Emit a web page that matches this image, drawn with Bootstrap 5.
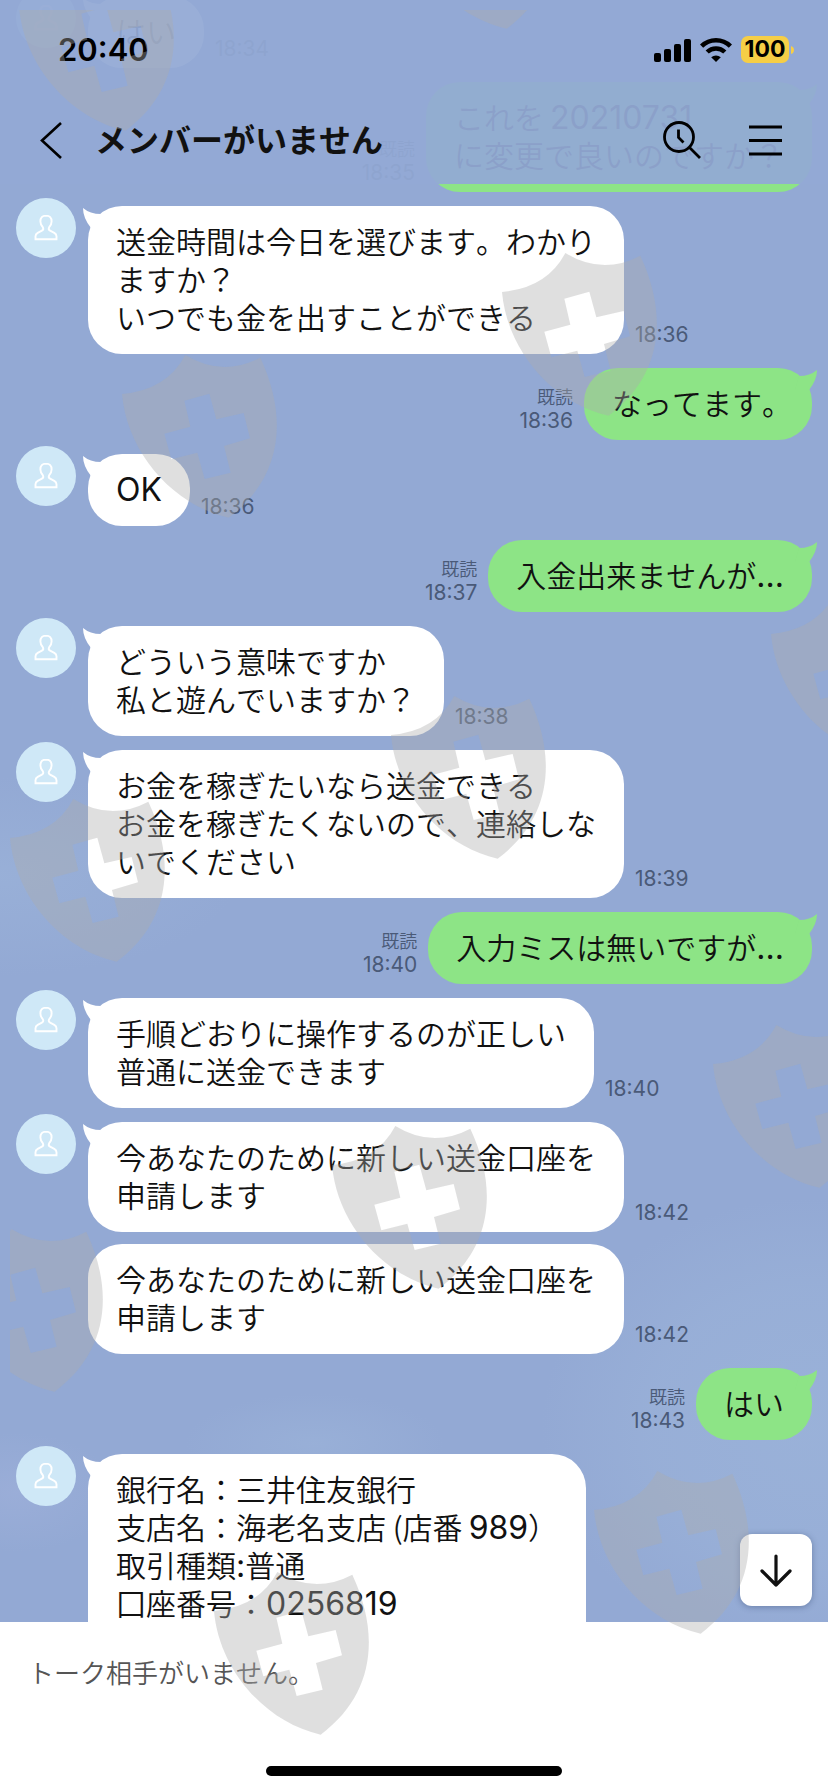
<!DOCTYPE html>
<html lang="ja">
<head>
<meta charset="utf-8">
<meta name="viewport" content="width=device-width, initial-scale=1">
<title>トーク</title>
<link href="https://cdn.jsdelivr.net/npm/bootstrap@5.3.0/dist/css/bootstrap.min.css" rel="stylesheet">
<style>
:root { --sky: #93a9d4; --own: #8de486; --ink: #111; }
body { font-family: "Noto Sans CJK JP", "Inter", sans-serif; font-weight: 350; font-kerning: none; color: var(--ink); background: #fff; }
.latin { font-family: "Inter", "Noto Sans CJK JP", sans-serif; font-weight: 400; font-kerning: normal; }

/* translucent bar over the scrolled conversation */
.topbar { background: rgba(147, 169, 212, .94); height: 184px; z-index: 5; }
.status { height: 80px; padding: 19px 34px 0 58px; }
.clock { font-size: 31px; font-weight: 600; line-height: 40px; color: #000; }
.battery { width: 48px; height: 27px; border-radius: 7px; background: #f6ce46; font-size: 23px; font-weight: 700; line-height: 27px; color: #000; }
.titlebar { height: 104px; padding: 16px 40px 0 34px; }
.titlebar h1 { font-size: 32px; font-weight: 700; line-height: 40px; margin-left: 26px; padding-bottom: 4px; }
.icon-btn { border: 0; background: none; padding: 0; line-height: 0; color: #000; }
.icon-btn + .icon-btn { margin-left: 40px; }

.chat {
  min-height: 0;
  background:
    radial-gradient(ellipse 270px 230px at 98% 88%, rgba(156, 180, 218, .75), rgba(156, 180, 218, .5) 60%, rgba(156, 180, 218, 0)),
    radial-gradient(ellipse 240px 100px at 0 54%, rgba(156, 180, 218, .6), rgba(156, 180, 218, 0)),
    radial-gradient(ellipse 100px 60px at 2% 92%, rgba(162, 178, 220, .5), rgba(162, 178, 220, 0)),
    radial-gradient(ellipse 130px 50px at 38% 89%, rgba(156, 180, 218, .6), rgba(156, 180, 218, 0)),
    var(--sky);
}
.log { padding: 0 16px; margin-top: -4px; }
.msg { gap: 11px; }
.msg + .msg { margin-top: 14px; }
.msg + .follow { margin-top: 12px; }
.follow { padding-left: 72px; }
.face { width: 60px; height: 60px; margin: -8px 1px 0 0; align-self: flex-start; }
.balloon { background: #fff; border-radius: 34px; padding: 15px 28px 19px; font-size: 30px; line-height: 38px; white-space: nowrap; }
.balloon .latin { font-size: 32px; line-height: 1; }
.balloon.mine { background: var(--own); }
.balloon.full-stop { padding-right: 20px; }
.tail { top: 2px; left: -5px; }
.mine .tail { left: auto; right: -5px; }
.stamp { color: #4a5a78; font-size: 21px; line-height: 24px; padding-bottom: 7px; }
.stamp small { display: block; font-family: "Noto Sans CJK JP", sans-serif; font-size: 18px; font-weight: 350; line-height: 26px; }
.to-end { right: 16px; bottom: 16px; width: 72px; height: 72px; border: 0; border-radius: 12px; background: #fff; box-shadow: 0 1px 6px rgba(40, 60, 100, .4); }

.composer { height: 170px; background: #fff; }
.composer p { font-size: 26px; line-height: 40px; color: #555; padding: 30px 28px 0; }
.home { width: 296px; height: 10px; border-radius: 5px; background: #000; margin-bottom: 16px; }

.stamps { inset: 10px 0 0 10px; overflow: hidden; pointer-events: none; z-index: 10; }
</style>
</head>
<body class="vh-100 d-flex flex-column position-relative overflow-hidden">

<svg width="0" height="0" class="position-absolute" aria-hidden="true">
  <defs>
    <g id="person">
      <circle cx="30" cy="30" r="30" fill="#cfe8f7"/>
      <path d="M30 17.6c-3.9 0-5.6 2.8-5.6 5.8 0 2.8 1.1 4.3 2.5 5.9.7 1.4.3 2.6-1 3.3l-4.2 2.2c-1.6.9-2.2 1.9-2.2 3.4v3.1h21v-3.1c0-1.5-.6-2.5-2.2-3.4l-4.2-2.2c-1.3-.7-1.7-1.9-1-3.3 1.4-1.6 2.5-3.1 2.5-5.9 0-3-1.7-5.8-5.6-5.8z" fill="none" stroke="#fff" stroke-width="1.9"/>
    </g>
    <path id="tail-left" d="M0 0Q7 6 18 6L22 20H8Q0 10 0 0Z" fill="#fff"/>
    <path id="tail-right" d="M22 0Q15 6 4 6L0 20H14Q22 10 22 0Z" fill="#8de486"/>
    <path id="shield" fill-rule="evenodd" transform="scale(.33333)" d="M0 117Q135 105 190 0Q301 68 415 8C500 190 480 370 320 488C150 450 15 290 0 117ZM187 137L262 116L283 193L365 174L384 250L306 273L326 353L248 372L226 293L148 313L127 236L205 215Z"/>
  </defs>
</svg>

<header class="topbar position-absolute top-0 start-0 end-0">
  <div class="status d-flex align-items-center justify-content-between">
    <span class="clock latin">20:40</span>
    <div class="d-flex align-items-center">
      <svg width="37" height="24" viewBox="0 0 37 24" aria-label="電波"><rect y="15" width="7" height="9" rx="2"/><rect x="10" y="11" width="7" height="13" rx="2"/><rect x="20" y="6" width="7" height="18" rx="2"/><rect x="30" y="1" width="7" height="23" rx="2"/></svg>
      <svg class="ms-2 me-2" width="34" height="24" viewBox="0 0 34 24" fill="none" stroke="#000" stroke-width="4.5" aria-label="Wi-Fi"><path d="M2.6 8.2a20.5 20.5 0 0 1 28.8 0"/><path d="M8.2 14a12.5 12.5 0 0 1 17.6 0"/><path d="M17 24l-4.8-4.700a7 7 0 0 1 9.6 0z" fill="#000" stroke="none"/></svg>
      <span class="battery latin text-center">100</span>
      <svg width="5" height="10" viewBox="0 0 5 10"><path d="M2 1q3 1 3 4t-3 4z" fill="#f6ce46"/></svg>
    </div>
  </div>
  <div class="titlebar d-flex align-items-center">
    <button class="icon-btn" type="button" aria-label="戻る"><svg width="35" height="40" viewBox="0 0 35 40" fill="none" stroke="currentColor" stroke-width="2.6"><path d="M27 3L8 20.5L27 38"/></svg></button>
    <h1 class="mb-0 text-nowrap">メンバーがいません</h1>
    <button class="icon-btn ms-auto" type="button" aria-label="検索"><svg width="40" height="40" viewBox="0 0 40 40" fill="none" stroke="currentColor" stroke-width="2.8"><circle cx="17" cy="17" r="14.5"/><path d="M16.5 9.5v8l5 5M27.5 27.5L38 38"/></svg></button>
    <button class="icon-btn" type="button" aria-label="メニュー"><svg width="46" height="40" viewBox="0 0 46 40" fill="none" stroke="currentColor" stroke-width="2.8"><path d="M7 7h33M7 20.5h33M7 34h33"/></svg></button>
  </div>
</header>

<main class="chat flex-grow-1 position-relative overflow-hidden">
  <div class="log">
    <article class="msg d-flex align-items-end">
      <svg class="face flex-shrink-0"><use href="#person"/></svg>
      <div class="balloon position-relative"><svg class="tail position-absolute" width="22" height="20"><use href="#tail-left"/></svg>はい</div>
      <time class="stamp latin">18:34</time>
    </article>
    <article class="msg d-flex align-items-end justify-content-end">
      <time class="stamp latin text-end"><small>既読</small>18:35</time>
      <div class="balloon mine position-relative"><svg class="tail position-absolute" width="22" height="20"><use href="#tail-right"/></svg>これを&thinsp;<span class="latin">20210731</span><br>に変更で良いのですか？</div>
    </article>
    <article class="msg d-flex align-items-end">
      <svg class="face flex-shrink-0"><use href="#person"/></svg>
      <div class="balloon position-relative"><svg class="tail position-absolute" width="22" height="20"><use href="#tail-left"/></svg>送金時間は今日を選びます。わかり<br>ますか？<br>いつでも金を出すことができる</div>
      <time class="stamp latin">18:36</time>
    </article>
    <article class="msg d-flex align-items-end justify-content-end">
      <time class="stamp latin text-end"><small>既読</small>18:36</time>
      <div class="balloon mine full-stop position-relative"><svg class="tail position-absolute" width="22" height="20"><use href="#tail-right"/></svg>なってます。</div>
    </article>
    <article class="msg d-flex align-items-end">
      <svg class="face flex-shrink-0"><use href="#person"/></svg>
      <div class="balloon position-relative"><svg class="tail position-absolute" width="22" height="20"><use href="#tail-left"/></svg><span class="latin">OK</span></div>
      <time class="stamp latin">18:36</time>
    </article>
    <article class="msg d-flex align-items-end justify-content-end">
      <time class="stamp latin text-end"><small>既読</small>18:37</time>
      <div class="balloon mine position-relative"><svg class="tail position-absolute" width="22" height="20"><use href="#tail-right"/></svg>入金出来ませんが<span class="latin">...</span></div>
    </article>
    <article class="msg d-flex align-items-end">
      <svg class="face flex-shrink-0"><use href="#person"/></svg>
      <div class="balloon position-relative"><svg class="tail position-absolute" width="22" height="20"><use href="#tail-left"/></svg>どういう意味ですか<br>私と遊んでいますか？</div>
      <time class="stamp latin">18:38</time>
    </article>
    <article class="msg d-flex align-items-end">
      <svg class="face flex-shrink-0"><use href="#person"/></svg>
      <div class="balloon position-relative"><svg class="tail position-absolute" width="22" height="20"><use href="#tail-left"/></svg>お金を稼ぎたいなら送金できる<br>お金を稼ぎたくないので、連絡しな<br>いでください</div>
      <time class="stamp latin">18:39</time>
    </article>
    <article class="msg d-flex align-items-end justify-content-end">
      <time class="stamp latin text-end"><small>既読</small>18:40</time>
      <div class="balloon mine position-relative"><svg class="tail position-absolute" width="22" height="20"><use href="#tail-right"/></svg>入力ミスは無いですが<span class="latin">...</span></div>
    </article>
    <article class="msg d-flex align-items-end">
      <svg class="face flex-shrink-0"><use href="#person"/></svg>
      <div class="balloon position-relative"><svg class="tail position-absolute" width="22" height="20"><use href="#tail-left"/></svg>手順どおりに操作するのが正しい<br>普通に送金できます</div>
      <time class="stamp latin">18:40</time>
    </article>
    <article class="msg d-flex align-items-end">
      <svg class="face flex-shrink-0"><use href="#person"/></svg>
      <div class="balloon position-relative"><svg class="tail position-absolute" width="22" height="20"><use href="#tail-left"/></svg>今あなたのために新しい送金口座を<br>申請します</div>
      <time class="stamp latin">18:42</time>
    </article>
    <article class="msg follow d-flex align-items-end">
      <div class="balloon">今あなたのために新しい送金口座を<br>申請します</div>
      <time class="stamp latin">18:42</time>
    </article>
    <article class="msg d-flex align-items-end justify-content-end">
      <time class="stamp latin text-end"><small>既読</small>18:43</time>
      <div class="balloon mine position-relative"><svg class="tail position-absolute" width="22" height="20"><use href="#tail-right"/></svg>はい</div>
    </article>
    <article class="msg d-flex align-items-end">
      <svg class="face flex-shrink-0"><use href="#person"/></svg>
      <div class="balloon rounded-bottom-0 position-relative"><svg class="tail position-absolute" width="22" height="20"><use href="#tail-left"/></svg>銀行名：三井住友銀行<br>支店名：海老名支店 (店番&thinsp;<span class="latin">989</span>）<br>取引種類<span class="latin">:</span>普通<br>囗座番号：<span class="latin">0256819</span></div>
    </article>
  </div>
  <button class="to-end position-absolute p-0" type="button" aria-label="最新のメッセージへ">
    <svg width="36" height="36" viewBox="0 0 36 36" fill="none" stroke="#111" stroke-width="3.2" stroke-linecap="round" stroke-linejoin="round"><path d="M18 4v29M4 19l14 14L32 19"/></svg>
  </button>
</main>

<footer class="composer flex-shrink-0 d-flex flex-column justify-content-between">
  <p class="mb-0">トーク相手がいません。</p>
  <div class="home align-self-center"></div>
</footer>

<div class="stamps position-absolute" aria-hidden="true">
  <svg width="100%" height="100%" fill="rgb(173,173,173)" fill-opacity=".39">
    <use href="#shield" x="9" y="-42"/>
    <use href="#shield" x="390" y="-144"/>
    <use href="#shield" x="492" y="243"/>
    <use href="#shield" x="112" y="345"/>
    <use href="#shield" x="761" y="585"/>
    <use href="#shield" x="381" y="686"/>
    <use href="#shield" x="0" y="789"/>
    <use href="#shield" x="703" y="1015"/>
    <use href="#shield" x="322" y="1116"/>
    <use href="#shield" x="-62" y="1219"/>
    <use href="#shield" x="584" y="1461"/>
    <use href="#shield" x="204" y="1562"/>
  </svg>
</div>

<script src="https://cdn.jsdelivr.net/npm/bootstrap@5.3.0/dist/js/bootstrap.bundle.min.js"></script>
</body>
</html>
